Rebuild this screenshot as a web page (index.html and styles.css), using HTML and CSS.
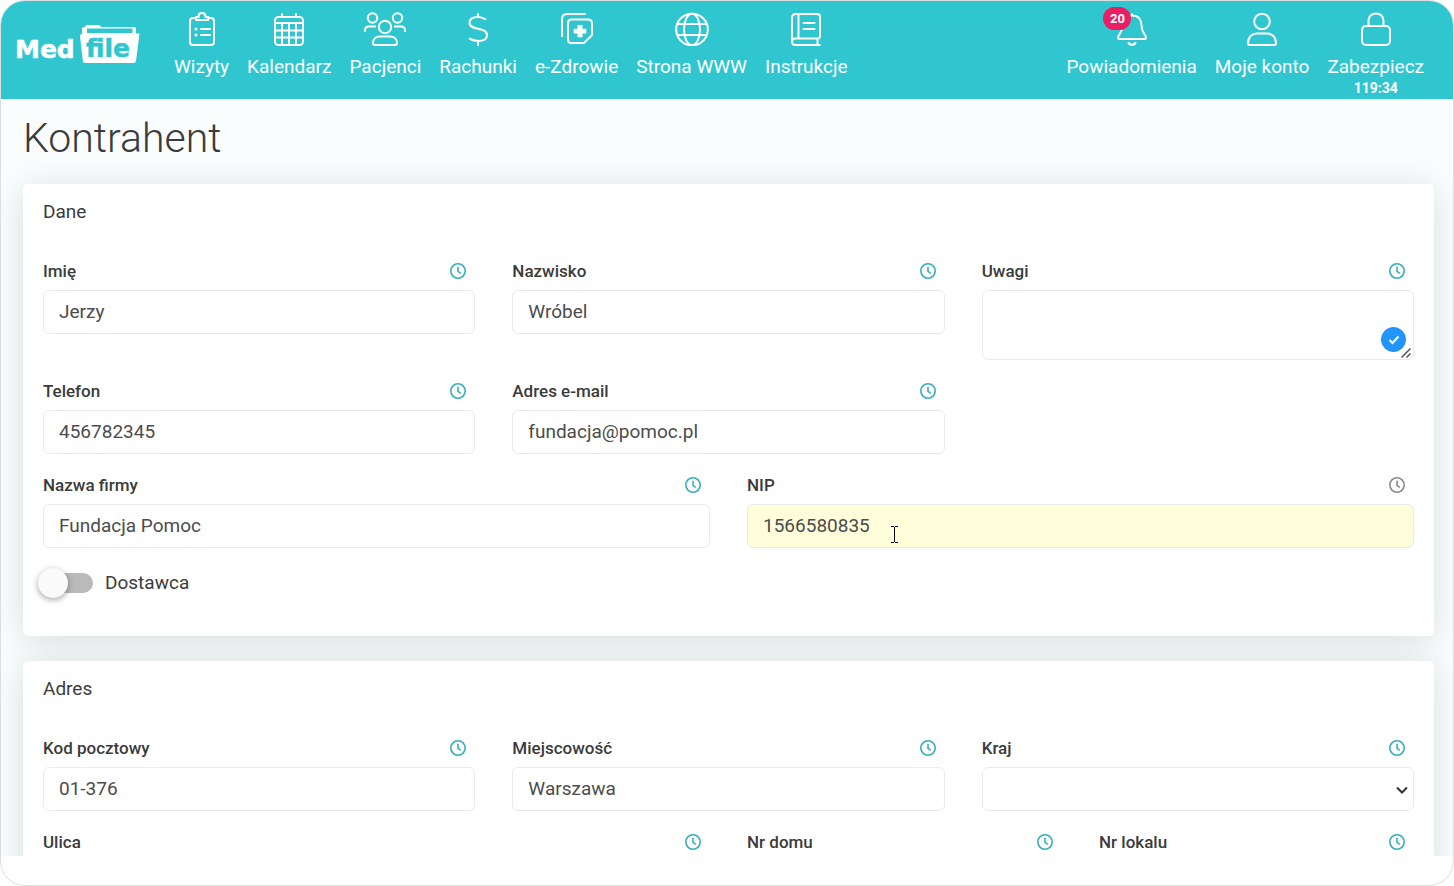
FILE: index.html
```html
<!DOCTYPE html>
<html lang="pl">
<head>
<meta charset="utf-8">
<meta name="viewport" content="width=device-width, initial-scale=1">
<title>Kontrahent – MedFile</title>
<link rel="stylesheet" href="styles.css">
</head>
<body>
<svg class="sprite" aria-hidden="true">
  <symbol id="clock" viewBox="0 0 16 16"><circle cx="8" cy="8" r="7.2"/><path d="M8 3.800V8.300L10.800 10.300"/></symbol>
</svg>
<div class="frame">
  <header class="topbar">
    <a class="logo" href="#" aria-label="MedFile">
      <svg width="126" height="42" viewBox="0 0 126 42">
        <path class="solid" d="M66 10V4.500Q66 3 67.500 3H69L70 1H83.500L85 3H118Q120 3 120 5V9.500H123.500L120 37Q119.600 39 117.500 39H69Q67 39 66.800 37L64 12Q63.800 10 66 10Z"/>
        <path class="slot" d="M71 4.500H116.500V9H71Z"/>
        <text class="logo-med" x="-1" y="34">Med</text>
        <text class="logo-file" x="70" y="33">file</text>
      </svg>
    </a>
    <nav class="nav">
      <a href="#"><svg class="icon" viewBox="0 0 34 34"><path d="M11 6H8Q5 6 5 9V30Q5 33 8 33H26Q29 33 29 30V9Q29 6 26 6H23M11 5V8H23V5H20.500C20.500-.500 13.500-.500 13.500 5Z"/><path d="M16 17H25M16 23H25" stroke-linecap="round"/><circle class="dot" cx="11" cy="17" r="1.600"/><circle class="dot" cx="11" cy="23" r="1.600"/></svg><span>Wizyty</span></a>
      <a href="#"><svg class="icon" viewBox="0 0 34 34"><rect x="3" y="5" width="28" height="28" rx="3.500"/><path d="M3 11H31M3 18.500H31M3 25.500H31M10 11V33M17 11V33M24 11V33M10 1V5M24 1V5"/></svg><span>Kalendarz</span></a>
      <a href="#"><svg class="icon icon-wide" viewBox="0 0 42 34"><circle cx="8.500" cy="6" r="4.700"/><circle cx="33.500" cy="6" r="4.700"/><circle cx="21" cy="15" r="6.200"/><path d="M1 20V18.500Q1 14.500 5 14.500H12M41 20V18.500Q41 14.500 37 14.500H30M9 31C9 27 12 24.500 16 24.500H26C30 24.500 33 27 33 31Q33 33 31 33H11Q9 33 9 31Z"/></svg><span>Pacjenci</span></a>
      <a href="#"><svg class="icon" viewBox="0 0 34 34"><path d="M17 1V5M17 29V34M25 7.500C22 5.800 20 5 17 5C11.500 5 8.500 7 8.500 11C8.500 19 26 14.500 26 23C26 27 22.500 29 17.500 29C13.500 29 11 28 8 26.500"/></svg><span>Rachunki</span></a>
      <a href="#"><svg class="icon" viewBox="0 0 34 34"><path d="M2 25V7Q2 2 7 2H26M11 7.500H28Q32 7.500 32 11.500V23L24 31H11Q8 31 8 27.500V11Q8 7.500 11 7.500Z"/><path class="dot" d="M17.500 13H22.500V16.800H26.300V21.500H22.500V25.300H17.500V21.500H13.700V16.800H17.500Z"/></svg><span>e-Zdrowie</span></a>
      <a href="#"><svg class="icon" viewBox="0 0 34 34"><circle cx="17" cy="17.500" r="15.800"/><ellipse cx="17" cy="17.500" rx="8" ry="15.800"/><path d="M2.500 12H31.500M2.500 23H31.500"/></svg><span>Strona WWW</span></a>
      <a href="#"><svg class="icon" viewBox="0 0 34 34"><path d="M31.500 33H6.500Q3 33 3 29.500V6Q3 2 7 2H28Q31 2 31 5V24Q31 26.500 28.500 26.500H6.500Q3 26.500 3 29.700M9.500 2V26.500M28.500 26.500V33"/><path d="M14.500 11H25.500M14.500 17H25.500" stroke-linecap="round"/></svg><span>Instrukcje</span></a>
    </nav>
    <nav class="nav">
      <a href="#"><svg class="icon" viewBox="0 0 34 34"><path d="M17 3V1.500M17 3.500C10.500 3.500 7.500 8 7.500 13.500C7.500 21 3 23 3 25.500Q3 27 5 27H29Q31 27 31 25.500C31 23 26.500 21 26.500 13.500C26.500 8 23.500 3.500 17 3.500ZM13.500 30C14 33.800 20 33.800 20.500 30"/></svg><b class="count">20</b><span>Powiadomienia</span></a>
      <a href="#"><svg class="icon" viewBox="0 0 34 34"><circle cx="17" cy="9.500" r="7.800"/><path d="M3 31C3 25 7 21.500 12 21.500H22C27 21.500 31 25 31 31Q31 33 29.500 33H4.500Q3 33 3 31Z"/></svg><span>Moje konto</span></a>
      <a href="#"><svg class="icon" viewBox="0 0 34 34"><rect x="3" y="14" width="28" height="19" rx="4"/><path d="M9.500 14V8.500C9.500-1 24.500-1 24.500 8.500V14"/></svg><span>Zabezpiecz</span><b class="timer">119:34</b></a>
    </nav>
  </header>

  <main class="content">
    <h1>Kontrahent</h1>

    <section class="card">
      <h2>Dane</h2>
      <div class="grid">
        <div class="field third"><div class="caption"><label for="imie">Imię</label><button type="button" aria-label="Historia: Imię"><svg class="clock"><use href="#clock"/></svg></button></div><input id="imie" type="text" value="Jerzy"></div>
        <div class="field third"><div class="caption"><label for="nazwisko">Nazwisko</label><button type="button" aria-label="Historia: Nazwisko"><svg class="clock"><use href="#clock"/></svg></button></div><input id="nazwisko" type="text" value="Wróbel"></div>
        <div class="field third"><div class="caption"><label for="uwagi">Uwagi</label><button type="button" aria-label="Historia: Uwagi"><svg class="clock"><use href="#clock"/></svg></button></div>
          <div class="control"><textarea id="uwagi"></textarea>
            <button class="check" type="button" aria-label="Sprawdź tekst"><svg width="12" height="10" viewBox="0 0 12 10"><path d="M1.500 5L4.500 8L10.500 1.500"/></svg></button>
            <svg class="grip" width="10" height="10" viewBox="0 0 10 10"><path d="M.500 9.500L9.500 .500M5.500 9.500L9.500 5.500"/></svg>
          </div></div>
        <div class="field third"><div class="caption"><label for="telefon">Telefon</label><button type="button" aria-label="Historia: Telefon"><svg class="clock"><use href="#clock"/></svg></button></div><input id="telefon" type="tel" value="456782345"></div>
        <div class="field third"><div class="caption"><label for="email">Adres e-mail</label><button type="button" aria-label="Historia: Adres e-mail"><svg class="clock"><use href="#clock"/></svg></button></div><input id="email" type="email" value="fundacja@pomoc.pl"></div>
        <div class="field half row-start"><div class="caption"><label for="firma">Nazwa firmy</label><button type="button" aria-label="Historia: Nazwa firmy"><svg class="clock"><use href="#clock"/></svg></button></div><input id="firma" type="text" value="Fundacja Pomoc"></div>
        <div class="field half"><div class="caption"><label for="nip">NIP</label><button class="muted" type="button" aria-label="Historia: NIP"><svg class="clock"><use href="#clock"/></svg></button></div>
          <div class="control"><input class="changed" id="nip" type="text" value="1566580835">
            <svg class="ibeam" width="7" height="17" viewBox="0 0 7 17"><path d="M0 .500H3M4 .500H7M3.500 1V16M0 16.500H3M4 16.500H7"/></svg>
          </div></div>
        <label class="switch"><input type="checkbox" role="switch"><span>Dostawca</span></label>
      </div>
    </section>

    <section class="card">
      <h2>Adres</h2>
      <div class="grid">
        <div class="field third"><div class="caption"><label for="kod">Kod pocztowy</label><button type="button" aria-label="Historia: Kod pocztowy"><svg class="clock"><use href="#clock"/></svg></button></div><input id="kod" type="text" value="01-376"></div>
        <div class="field third"><div class="caption"><label for="miasto">Miejscowość</label><button type="button" aria-label="Historia: Miejscowość"><svg class="clock"><use href="#clock"/></svg></button></div><input id="miasto" type="text" value="Warszawa"></div>
        <div class="field third"><div class="caption"><label for="kraj">Kraj</label><button type="button" aria-label="Historia: Kraj"><svg class="clock"><use href="#clock"/></svg></button></div>
          <div class="control"><select id="kraj"><option></option></select><svg class="chevron" width="12" height="8" viewBox="0 0 12 8"><path d="M1 1.500L6 6.500L11 1.500"/></svg></div></div>
        <div class="field half"><div class="caption"><label for="ulica">Ulica</label><button type="button" aria-label="Historia: Ulica"><svg class="clock"><use href="#clock"/></svg></button></div><input id="ulica" type="text"></div>
        <div class="field quarter"><div class="caption"><label for="dom">Nr domu</label><button type="button" aria-label="Historia: Nr domu"><svg class="clock"><use href="#clock"/></svg></button></div><input id="dom" type="text"></div>
        <div class="field quarter"><div class="caption"><label for="lokal">Nr lokalu</label><button type="button" aria-label="Historia: Nr lokalu"><svg class="clock"><use href="#clock"/></svg></button></div><input id="lokal" type="text"></div>
      </div>
    </section>
  </main>
</div>
</body>
</html>
```
FILE: styles.css
```css
* { box-sizing: border-box; }

body {
  margin: 0;
  background: #fff;
  color: #3b3b3b;
  font: 19px/24px Roboto, sans-serif;
}

.sprite { position: absolute; width: 0; height: 0; }

.frame {
  display: flex;
  flex-direction: column;
  height: 100vh;
  padding-bottom: 29px;
  border: 1px solid #dcdfe0;
  border-radius: 25px;
  background: #fff;
  overflow: hidden;
}

/* top bar */
.topbar {
  display: flex;
  flex: none;
  justify-content: space-between;
  min-height: 98px;
  padding: 11px 29px 0 15px;
  background: #30c6cf;
}

.logo { margin: 12px 32px 0 0; }
.logo svg { display: block; overflow: visible; }
.logo .solid { fill: #fff; }
.logo .slot { fill: #30c6cf; }
.logo text {
  font: bold 25px "DejaVu Sans", sans-serif;
  stroke-width: .5;
}
.logo-med { fill: #fff; stroke: #fff; }
.logo-file { fill: #30c6cf; stroke: #30c6cf; }

.nav { display: flex; gap: 18px; }
.nav:first-of-type { margin-right: auto; }

.nav a {
  position: relative;
  display: flex;
  flex-direction: column;
  align-items: center;
  color: #fff;
  text-decoration: none;
}

.icon {
  width: 34px;
  height: 34px;
  margin-bottom: 9px;
  fill: none;
  stroke: #fff;
  stroke-width: 2;
}
.icon-wide { width: 42px; }
.icon .dot { fill: #fff; stroke: none; }

.count {
  position: absolute;
  top: -5px;
  left: 37px;
  min-width: 28px;
  border-radius: 12px;
  background: #e91e63;
  font-size: 13px;
  line-height: 23px;
  text-align: center;
}

.timer { font-size: 14px; line-height: 18px; }

/* page */
.content {
  flex: 1;
  min-height: 0;
  padding: 15px 19px 0 22px;
  background: #f9fdfe;
  overflow: hidden;
}

h1 {
  margin: 0 0 22px;
  font-size: 41px;
  font-weight: 300;
  line-height: 48px;
}

.card {
  margin-bottom: 25px;
  padding: 16px 20px 37px;
  border-radius: 5px;
  background: #fff;
  box-shadow: 0 4px 35px rgba(0, 0, 0, .13);
}

h2 {
  margin: 0 0 35px;
  font-size: 19px;
  font-weight: 400;
  line-height: 24px;
}

.grid {
  display: grid;
  grid-template-columns: repeat(12, minmax(0, 1fr));
  gap: 19px 37px;
}
.third { grid-column-end: span 4; }
.half { grid-column-end: span 6; }
.quarter { grid-column-end: span 3; }
.row-start { grid-column-start: 1; }

.caption {
  display: flex;
  align-items: center;
  justify-content: space-between;
  margin-bottom: 7px;
  padding-right: 9px;
}
.caption label { font-size: 17px; font-weight: 500; }
.caption button {
  display: flex;
  padding: 0;
  border: 0;
  background: none;
  color: #35afb9;
}
.caption .muted { color: #8a8a8a; }

.clock {
  width: 16px;
  height: 16px;
  fill: none;
  stroke: currentColor;
  stroke-width: 1.6;
}

.control { position: relative; }

.field input,
.field select,
.field textarea {
  display: block;
  width: 100%;
  height: 44px;
  padding: 0 15px 1px;
  border: 1px solid #e8eaee;
  border-radius: 6px;
  outline: 0;
  background: #fff;
  color: #4c4c4c;
  font: inherit;
  appearance: none;
  resize: none;
}
.field textarea { height: 70px; padding: 9px 15px; }
.field .changed { background: #fefeda; }

.check {
  position: absolute;
  right: 8px;
  bottom: 8px;
  display: grid;
  place-items: center;
  width: 25px;
  height: 25px;
  padding: 0;
  border: 1px solid #2487f5;
  border-radius: 50%;
  background: #2196ff;
}
.check svg { fill: none; stroke: #fff; stroke-width: 2; }

.grip {
  position: absolute;
  right: 3px;
  bottom: 2px;
  fill: none;
  stroke: #555;
  stroke-width: 1.5;
}

.chevron {
  position: absolute;
  top: 19px;
  right: 6px;
  fill: none;
  stroke: #333;
  stroke-width: 2;
  pointer-events: none;
}

.ibeam {
  position: absolute;
  top: 22px;
  left: 144px;
  fill: none;
  stroke: #000;
  pointer-events: none;
}

/* switch */
.switch {
  grid-column: 1 / -1;
  display: flex;
  align-items: center;
  gap: 12px;
  height: 32px;
}
.switch input {
  position: relative;
  width: 50px;
  height: 20px;
  margin: 0;
  border-radius: 10px;
  background: #bababa;
  appearance: none;
}
.switch input::before {
  content: "";
  position: absolute;
  top: -5px;
  left: -5px;
  width: 30px;
  height: 30px;
  border-radius: 50%;
  background: #fafafa;
  box-shadow: 0 2px 6px rgba(0, 0, 0, .35);
}
.switch input:checked::before { left: 25px; }
```
